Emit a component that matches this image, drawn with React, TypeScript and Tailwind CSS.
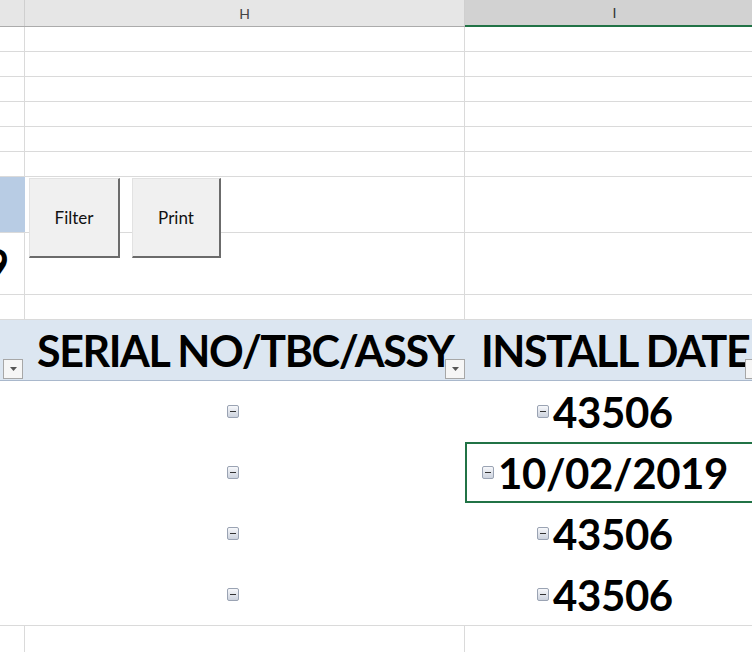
import React from "react"

const FONT = { fontFamily: "Lato, 'Open Sans', sans-serif" }

function Collapse() {
  return (
    <span className="inline-block w-[12px] h-[13px] rounded-[2px] border border-[#9aa3b3] bg-gradient-to-b from-[#f7f8fb] to-[#cdd3de] relative align-middle">
      <span className="absolute left-[2px] right-[2px] top-[5px] h-[1px] bg-[#333]" />
    </span>
  )
}

function Dropdown() {
  return (
    <span className="w-[20px] h-[20px] bg-[#f6f6f6] border border-[#a7a7a7] flex items-center justify-center">
      <svg width="7" height="4" viewBox="0 0 7 4">
        <path d="M0 0h7L3.5 4z" fill="#555" />
      </svg>
    </span>
  )
}

function GridRow({ h, children }: { h: number; children?: React.ReactNode }) {
  return (
    <div className="flex border-b border-[#dadada]" style={{ height: h }}>
      {children ?? (
        <>
          <div className="w-[25px] border-r border-[#dadada]" />
          <div className="w-[440px] border-r border-[#dadada]" />
          <div className="flex-1" />
        </>
      )}
    </div>
  )
}

const rows = ["43506", "10/02/2019", "43506", "43506"]

export default function App() {
  return (
    <div className="w-[752px] h-[652px] overflow-hidden bg-white relative" style={FONT}>
      {/* column headers */}
      <div className="flex h-[27px] bg-[#e6e6e6] border-b border-[#ababab]">
        <div className="w-[25px] border-r border-[#cfcfcf]" />
        <div className="w-[440px] border-r border-[#cfcfcf] flex items-center justify-center text-[14px] text-[#444]">H</div>
        <div className="flex-1 bg-[#d2d2d2] border-b-2 border-[#217346] flex items-center justify-center text-[14px] text-[#333] pl-[12px] -mb-px">
          I
        </div>
      </div>

      <GridRow h={25} />
      <GridRow h={25} />
      <GridRow h={25} />
      <GridRow h={25} />
      <GridRow h={25} />
      <GridRow h={25} />

      <GridRow h={56}>
        <div className="w-[25px] bg-[#b8cce4] border-r border-[#b8cce4]" />
        <div className="w-[440px] border-r border-[#dadada]" />
        <div className="flex-1" />
      </GridRow>
      <GridRow h={62}>
        <div className="w-[25px] border-r border-[#dadada] overflow-hidden flex items-center justify-end">
          <span className="text-[42px] font-bold text-black leading-none -translate-x-[15px]">9</span>
        </div>
        <div className="w-[440px] border-r border-[#dadada]" />
        <div className="flex-1" />
      </GridRow>
      <GridRow h={25} />

      {/* table header */}
      <div className="flex h-[61px] bg-[#dce6f1] border-b border-[#a9b8cc] relative">
        <div className="w-[25px] flex items-end pb-[1px] pl-[3px]">
          <Dropdown />
        </div>
        <div className="w-[440px] flex items-center pl-[12px] relative">
          <span className="text-[43px] font-bold text-black leading-none tracking-[-1.4px] whitespace-nowrap">SERIAL NO/TBC/ASSY</span>
          <div className="absolute right-[0px] bottom-[1px]">
            <Dropdown />
          </div>
        </div>
        <div className="flex-1 flex items-center pl-[16px] relative overflow-hidden">
          <span className="text-[43px] font-bold text-black leading-none tracking-[-1.4px] whitespace-nowrap">INSTALL DATE</span>
          <div className="absolute left-[280px] bottom-[1px]">
            <Dropdown />
          </div>
        </div>
      </div>

      {rows.map((v, i) => (
        <div key={i} className="flex h-[61px]">
          <div className="w-[25px]" />
          <div className="w-[440px] flex items-center justify-center pr-[24px]">
            <Collapse />
          </div>
          <div
            className={`flex-1 flex items-center ${
              i === 1 ? "border-2 border-[#217346] pl-[15px] -mr-[20px]" : "pl-[72px]"
            }`}
          >
            <Collapse />
            <span className="ml-[4px] text-[42px] font-bold text-black leading-none tracking-[-0.4px]">{v}</span>
          </div>
        </div>
      ))}

      <div className="flex h-[30px] border-t border-[#dadada]">
        <div className="w-[25px] border-r border-[#dadada]" />
        <div className="w-[440px] border-r border-[#dadada]" />
        <div className="flex-1" />
      </div>

      {/* form buttons */}
      <button className="absolute left-[29px] top-[178px] w-[91px] h-[80px] bg-[#f0f0f0] border-t border-l border-[#e2e2e2] border-r-2 border-b-2 border-r-[#6b6b6b] border-b-[#6b6b6b] text-[17px] text-[#111]">
        Filter
      </button>
      <button className="absolute left-[132px] top-[178px] w-[89px] h-[80px] bg-[#f0f0f0] border-t border-l border-[#e2e2e2] border-r-2 border-b-2 border-r-[#6b6b6b] border-b-[#6b6b6b] text-[17px] text-[#111]">
        Print
      </button>
    </div>
  )
}
